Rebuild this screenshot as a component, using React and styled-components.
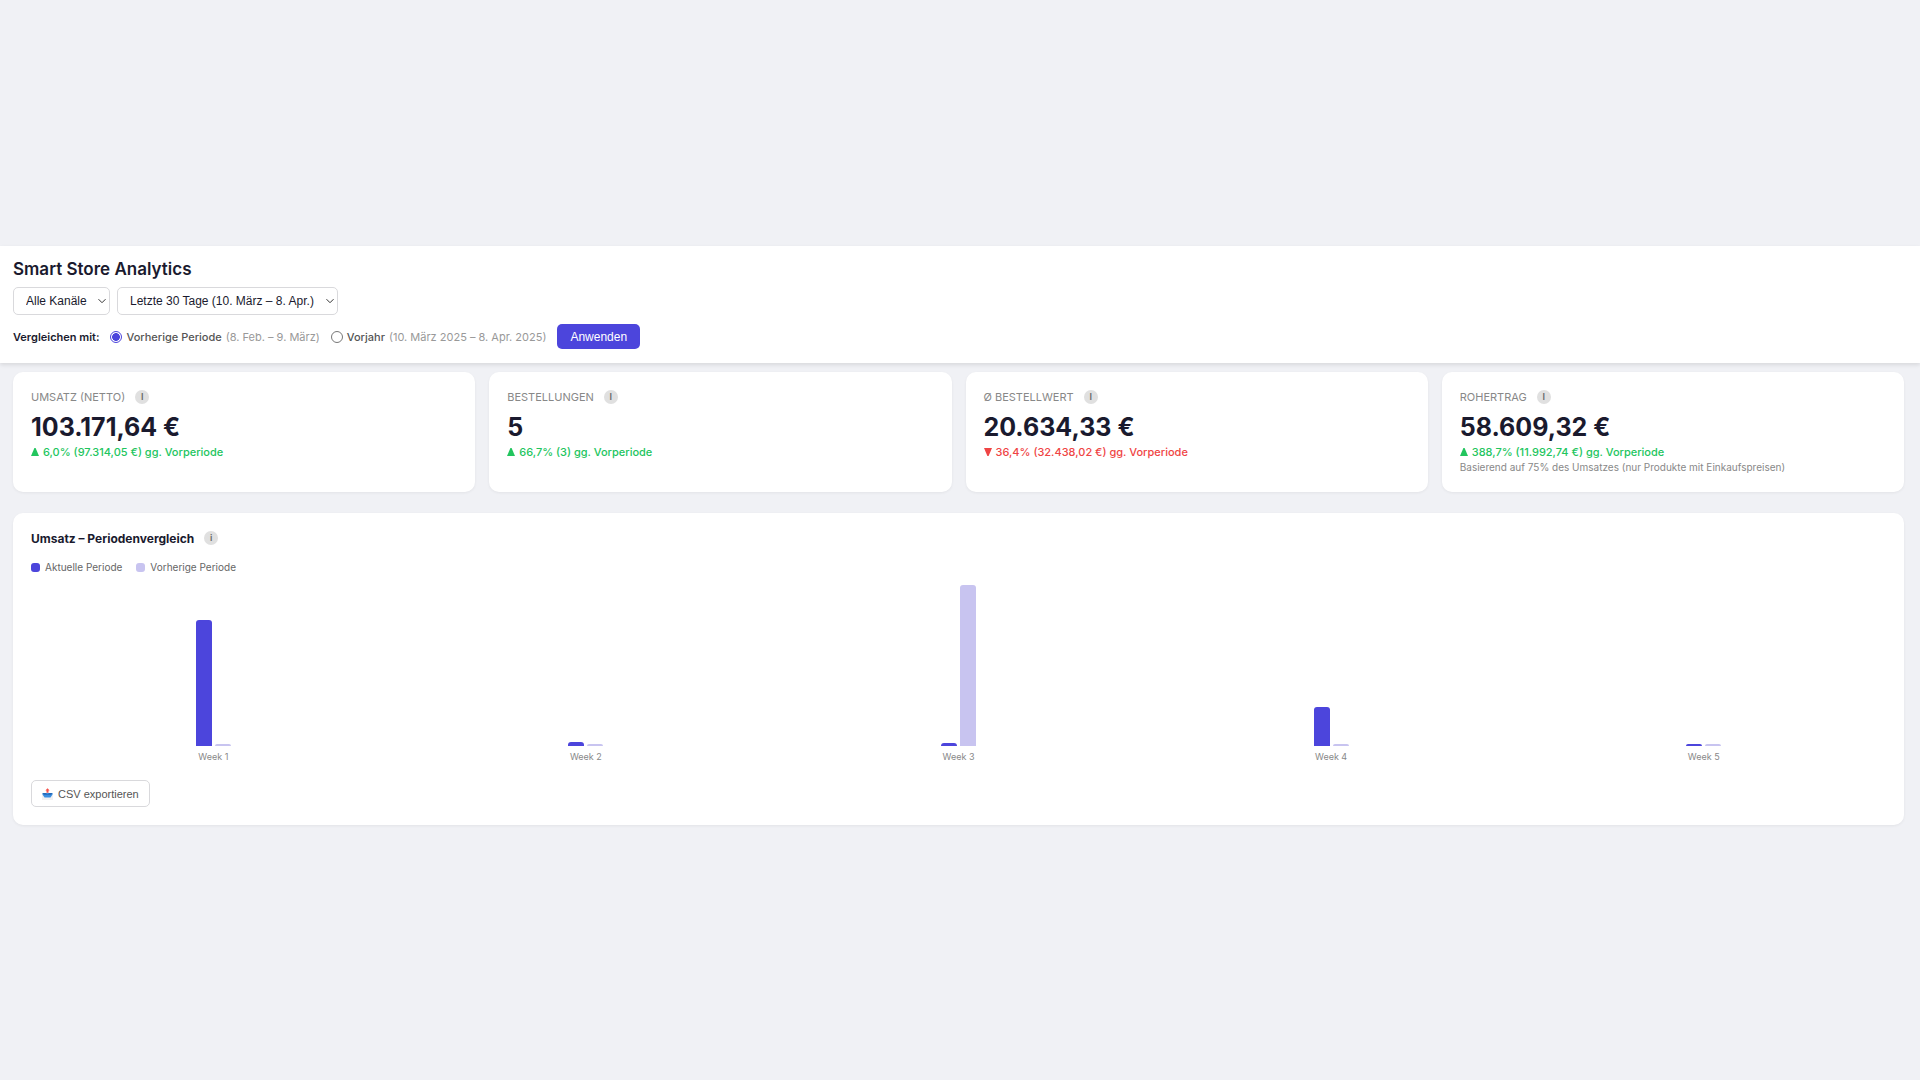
import React, { useState } from 'react';
import styled, { createGlobalStyle } from 'styled-components';

const indigo = '#4c45dc';
const lavender = '#c8c4f0';
const ink = '#1a1a2e';

const GlobalStyle = createGlobalStyle`
  * {
    box-sizing: border-box;
  }
  body {
    margin: 0;
    background-color: #f0f1f5;
    color: ${ink};
    font-family: Inter, "Liberation Sans", sans-serif;
    font-size: 11px;
  }
`;

const Page = styled.div`
  min-height: 100vh;
  display: flex;
  flex-direction: column;
  justify-content: center;
`;

const Header = styled.header`
  background-color: white;
  padding: 12px 13px 14px;
  box-shadow: 0 2px 4px rgba(0, 0, 0, 0.1);
`;

const Title = styled.h1`
  margin: 0 0 7px;
  font-size: 17px;
  line-height: 22px;
  font-weight: 600;
`;

const Filters = styled.div`
  display: flex;
  gap: 7px;
  margin-bottom: 9px;
`;

const SelectBox = styled.div`
  display: grid;
  align-items: center;

  > * {
    grid-area: 1 / 1;
  }
  svg {
    justify-self: end;
    margin-right: 4px;
    pointer-events: none;
  }
`;

const Select = styled.select`
  appearance: none;
  height: 28px;
  padding: 0 22px 0 12px;
  border: 1px solid #d9d9dc;
  border-radius: 5px;
  background-color: white;
  color: ${ink};
  font-family: "Liberation Sans", Arial, sans-serif;
  font-size: 12px;
`;

const CompareRow = styled.form`
  display: flex;
  align-items: center;
  gap: 11px;
`;

const CompareLabel = styled.span`
  font-weight: 600;
`;

const RadioLabel = styled.label`
  display: flex;
  align-items: center;
  gap: 4px;
  color: #555;
  font-weight: 500;
`;

const Radio = styled.input`
  appearance: none;
  width: 12px;
  height: 12px;
  margin: 0;
  border: 1px solid #777;
  border-radius: 50%;
  background-color: white;

  &:checked {
    border-color: ${indigo};
    background: radial-gradient(circle, ${indigo} 50%, white 60%);
  }
`;

const RadioRange = styled.span`
  color: #999;
  font-weight: 400;
`;

const ApplyButton = styled.button`
  height: 25px;
  padding: 0 13px;
  border: none;
  border-radius: 5px;
  background-color: ${indigo};
  color: white;
  font-family: "Liberation Sans", Arial, sans-serif;
  font-size: 12px;
`;

const Main = styled.main`
  display: grid;
  gap: 21px;
  padding: 9px 16px 9px 13px;
`;

const CardGrid = styled.div`
  display: grid;
  grid-template-columns: repeat(4, 1fr);
  gap: 14px;
`;

const Card = styled.section`
  padding: 18px;
  border-radius: 10px;
  background-color: white;
  box-shadow: 0 1px 3px rgba(0, 0, 0, 0.06);
`;

const CardHead = styled.div`
  display: flex;
  align-items: center;
  gap: 10px;
  height: 14px;
`;

const CardLabel = styled.h2`
  margin: 0;
  color: #888;
  font-size: 11px;
  font-weight: 400;
  text-transform: uppercase;
`;

const InfoButton = styled.button`
  width: 14px;
  height: 14px;
  padding: 0;
  border: none;
  border-radius: 50%;
  background-color: #e0e0e0;
  color: #666;
  font-family: inherit;
  font-size: 9px;
  line-height: 14px;
  font-weight: 600;
  text-align: center;
`;

const CardValue = styled.div`
  margin-top: 7px;
  font-size: 25px;
  line-height: 32px;
  font-weight: 700;
`;

const Delta = styled.div`
  display: flex;
  align-items: center;
  gap: 4px;
  line-height: 18px;
  font-weight: 500;
  color: ${({ $down }) => ($down ? '#ef4444' : '#22c55e')};
`;

const Note = styled.div`
  color: #888;
  font-size: 10px;
  line-height: 13px;
`;

const ChartTitle = styled.h2`
  margin: 0;
  font-size: 12px;
  font-weight: 700;
`;

const Legend = styled.div`
  display: flex;
  gap: 14px;
  margin-top: 15px;
  color: #666;
  font-size: 10px;
  line-height: 14px;
`;

const LegendItem = styled.div`
  display: flex;
  align-items: center;
  gap: 5px;

  &::before {
    content: '';
    width: 9px;
    height: 9px;
    border-radius: 3px;
    background-color: ${({ $color }) => $color};
  }
`;

const Chart = styled.div`
  display: grid;
  grid-template-columns: repeat(5, 1fr);
  gap: 8px;
  margin-top: 9px;
`;

const Week = styled.div`
  display: flex;
  flex-direction: column;
  align-items: center;
  color: #888;
  font-size: 9px;
  line-height: 12px;
`;

const Bars = styled.div`
  display: flex;
  align-items: flex-end;
  gap: 3px;
  height: 163px;
  margin-bottom: 5px;
`;

const Bar = styled.div`
  width: 16px;
  border-radius: 3px 3px 0 0;
  background-color: ${({ $color }) => $color};
`;

const ExportButton = styled.button`
  display: flex;
  align-items: center;
  gap: 5px;
  height: 27px;
  margin-top: 17px;
  padding: 0 10px;
  border: 1px solid #d9d9dc;
  border-radius: 5px;
  background-color: white;
  color: #555;
  font-family: "Liberation Sans", Arial, sans-serif;
  font-size: 11px;
`;

const cards = [
  { label: 'Umsatz (netto)', value: '103.171,64 €', delta: '6,0% (97.314,05 €) gg. Vorperiode' },
  { label: 'Bestellungen', value: '5', delta: '66,7% (3) gg. Vorperiode' },
  { label: 'Ø Bestellwert', value: '20.634,33 €', delta: '36,4% (32.438,02 €) gg. Vorperiode', down: true },
  {
    label: 'Rohertrag',
    value: '58.609,32 €',
    delta: '388,7% (11.992,74 €) gg. Vorperiode',
    note: 'Basierend auf 75% des Umsatzes (nur Produkte mit Einkaufspreisen)'
  }
];

// bar heights in pixels
const weeks = [
  { name: 'Week 1', current: 126, previous: 2 },
  { name: 'Week 2', current: 4, previous: 2 },
  { name: 'Week 3', current: 3, previous: 161 },
  { name: 'Week 4', current: 39, previous: 2 },
  { name: 'Week 5', current: 2, previous: 2 }
];

function Chevron() {
  return (
    <svg width="8" height="8" viewBox="0 0 8 8" fill="none" stroke="#333" aria-hidden="true">
      <path d="M0.5 2.2 4 5.7 7.5 2.2" />
    </svg>
  );
}

function Triangle({ down }) {
  return (
    <svg width="8" height="8" viewBox="0 0 8 8" fill="currentColor" aria-hidden="true">
      <path d={down ? 'M0 0H8L4.6 8H3.4Z' : 'M0 8H8L4.6 0H3.4Z'} />
    </svg>
  );
}

function OutboxIcon() {
  return (
    <svg width="11" height="12" viewBox="0 0 11 12" aria-hidden="true">
      <path d="M0 7H11V12H0Z" fill="#f0f0f2" />
      <path d="M0.5 5H10.5V6.5L8.5 9.5H2.5L0.5 6.5Z" fill="#3b8ee0" />
      <path d="M0.5 5H3.5L5.5 6.3 7.5 5H10.5L9 6.8H2Z" fill="#2467b5" />
      <path d="M5.5 0.3 7.6 2.4H6.5V4.8H4.5V2.4H3.4Z" fill="#f4504a" />
    </svg>
  );
}

function KpiCard({ label, value, delta, down, note }) {
  return (
    <Card>
      <CardHead>
        <CardLabel>{label}</CardLabel>
        <InfoButton type="button" aria-label={`Info: ${label}`}>I</InfoButton>
      </CardHead>
      <CardValue>{value}</CardValue>
      <Delta $down={down}>
        <Triangle down={down} />
        {delta}
      </Delta>
      {note && <Note>{note}</Note>}
    </Card>
  );
}

export default function App() {
  const [compare, setCompare] = useState('period');

  return (
    <>
      <GlobalStyle />
      <Page>
        <Header>
          <Title>Smart Store Analytics</Title>
          <Filters>
            <SelectBox>
              <Select aria-label="Kanal">
                <option>Alle Kanäle</option>
              </Select>
              <Chevron />
            </SelectBox>
            <SelectBox>
              <Select aria-label="Zeitraum">
                <option>Letzte 30 Tage (10. März – 8. Apr.)</option>
              </Select>
              <Chevron />
            </SelectBox>
          </Filters>
          <CompareRow onSubmit={e => e.preventDefault()}>
            <CompareLabel>Vergleichen mit:</CompareLabel>
            <RadioLabel>
              <Radio
                type="radio"
                name="compare"
                checked={compare === 'period'}
                onChange={() => setCompare('period')}
              />
              Vorherige Periode
              <RadioRange>(8. Feb. – 9. März)</RadioRange>
            </RadioLabel>
            <RadioLabel>
              <Radio
                type="radio"
                name="compare"
                checked={compare === 'year'}
                onChange={() => setCompare('year')}
              />
              Vorjahr
              <RadioRange>(10. März 2025 – 8. Apr. 2025)</RadioRange>
            </RadioLabel>
            <ApplyButton type="submit">Anwenden</ApplyButton>
          </CompareRow>
        </Header>
        <Main>
          <CardGrid>
            {cards.map(card => <KpiCard key={card.label} {...card} />)}
          </CardGrid>
          <Card>
            <CardHead>
              <ChartTitle>Umsatz – Periodenvergleich</ChartTitle>
              <InfoButton type="button" aria-label="Info: Periodenvergleich">i</InfoButton>
            </CardHead>
            <Legend>
              <LegendItem $color={indigo}>Aktuelle Periode</LegendItem>
              <LegendItem $color={lavender}>Vorherige Periode</LegendItem>
            </Legend>
            <Chart>
              {weeks.map(week => (
                <Week key={week.name}>
                  <Bars>
                    <Bar $color={indigo} style={{ height: week.current }} />
                    <Bar $color={lavender} style={{ height: week.previous }} />
                  </Bars>
                  {week.name}
                </Week>
              ))}
            </Chart>
            <ExportButton type="button">
              <OutboxIcon />
              CSV exportieren
            </ExportButton>
          </Card>
        </Main>
      </Page>
    </>
  );
}
